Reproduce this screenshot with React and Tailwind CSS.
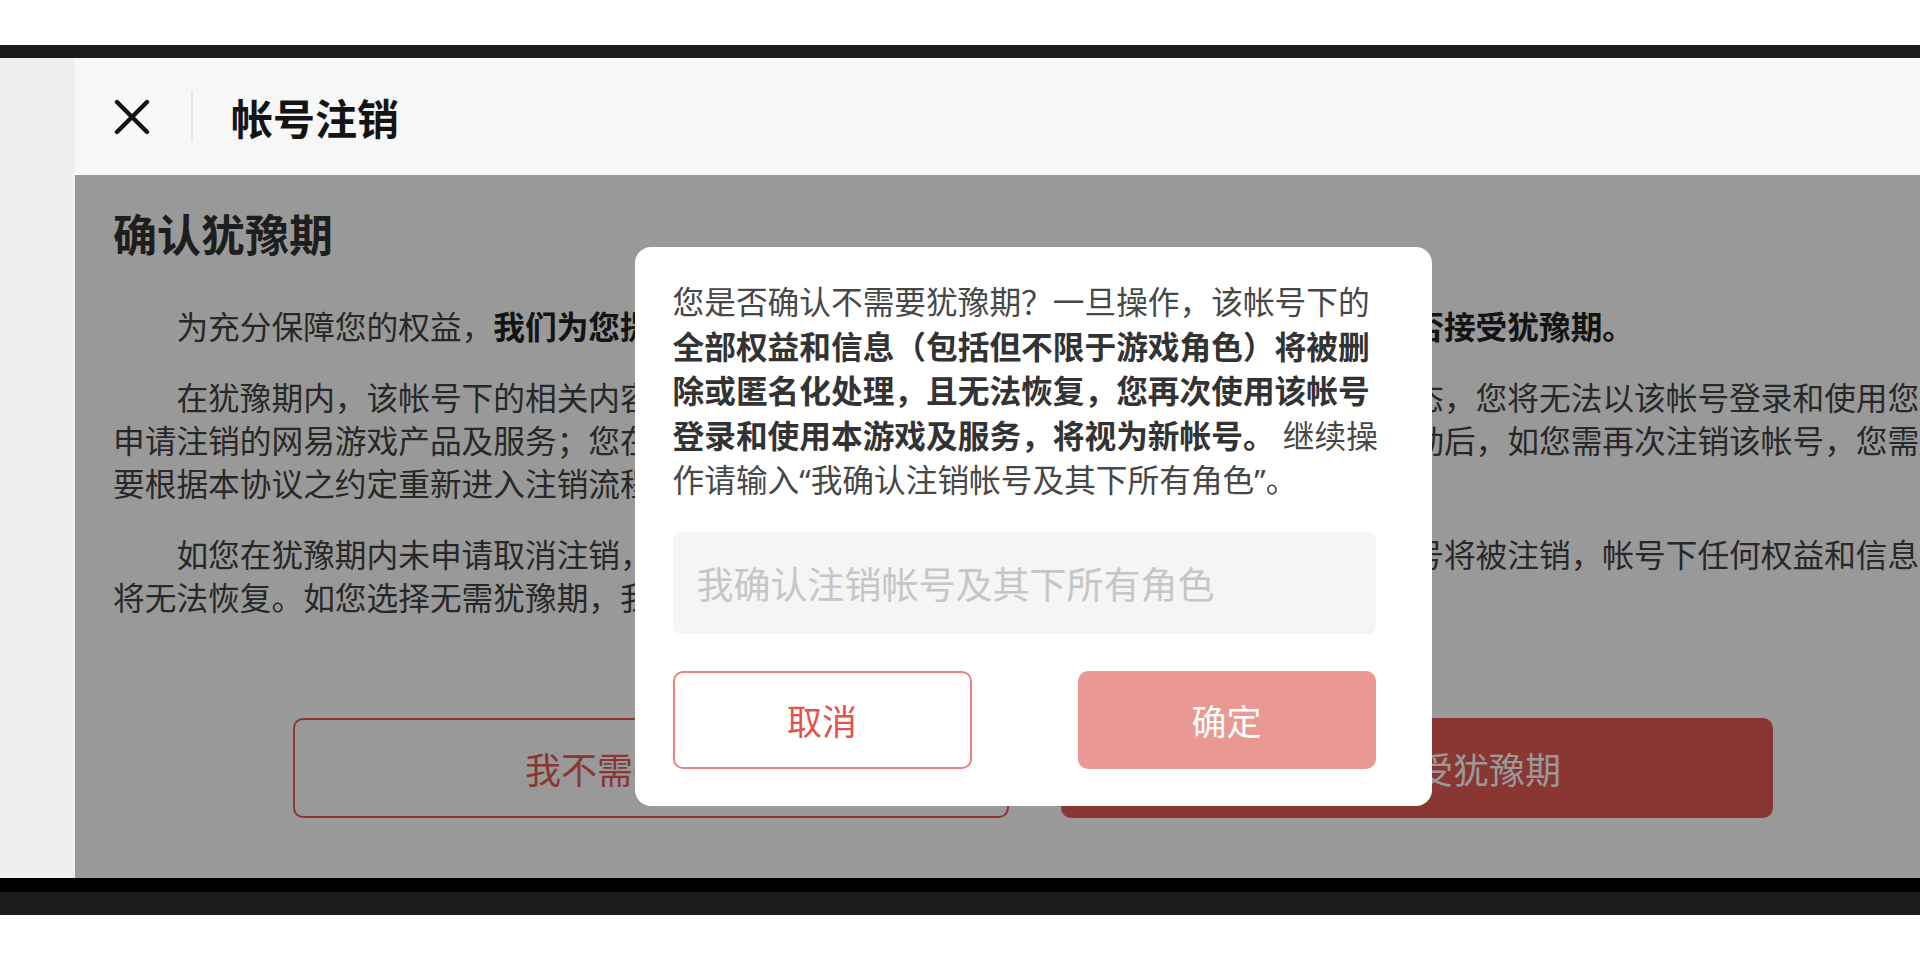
const RED = 'text-[#e65b55]';

function CloseIcon() {
  return (
    <svg width="36" height="36" viewBox="0 0 36 36" fill="none" stroke="#141414" strokeWidth="4.4" strokeLinecap="round">
      <line x1="3" y1="3" x2="33" y2="33" />
      <line x1="33" y1="3" x2="3" y2="33" />
    </svg>
  );
}

function ConfirmDialog() {
  return (
    <div className="w-[797px] rounded-2xl bg-white pl-[38px] pr-[56px] pt-[33px] pb-[37px]">
      {/* latin font first so the curly quotes stay narrow */}
      <p className="w-[719px] text-[31.7px] leading-[44.5px] text-[#474747] font-['Noto_Sans','Noto_Sans_CJK_SC',sans-serif]">
        您是否确认不需要犹豫期？一旦操作，该帐号下的
        <b className="font-bold text-[#333]">
          全部权益和信息（包括但不限于游戏角色）将被删除或匿名化处理，且无法恢复，您再次使用该帐号登录和使用本游戏及服务，将视为新帐号。
        </b>{' '}
        继续操作请输入“我确认注销帐号及其下所有角色”。
      </p>
      <input
        readOnly
        placeholder="我确认注销帐号及其下所有角色"
        className="mt-[29px] block w-full h-[102px] rounded-lg bg-[#f5f5f5] pl-[24px] text-[37px] outline-none placeholder:text-[#c6c6c6]"
      />
      <div className="mt-[37px] flex justify-between">
        <button
          type="button"
          className="w-[299px] h-[98px] rounded-[10px] border-2 border-[#ee7f7a] text-[#e3524d] text-[35px]"
        >
          取消
        </button>
        <button
          type="button"
          className="w-[298px] h-[98px] rounded-[10px] bg-[#ea9894] text-white text-[35px]"
        >
          确定
        </button>
      </div>
    </div>
  );
}

export default function App() {
  return (
    <div className="w-[1920px] h-[960px] overflow-hidden bg-white flex flex-col font-['Noto_Sans_CJK_SC','Noto_Sans',sans-serif]">
      <div className="h-[45px] shrink-0 bg-white" />
      <div className="h-[13px] shrink-0 bg-[#1c1c1e]" />
      <div className="flex h-[820px] shrink-0">
        <aside className="w-[75px] shrink-0 bg-[#efeff1]" />
        <div className="flex-1 min-w-0 flex flex-col">
          <header className="h-[117px] shrink-0 bg-[#f7f7f8] flex items-center pl-[39px]">
            <CloseIcon />
            <span className="ml-[41px] mr-[38px] w-[2px] h-[51px] bg-[#e6e6e6]" />
            <h1 className="text-[42px] leading-none font-bold text-[#141414]">帐号注销</h1>
          </header>
          <main className="relative flex-1 overflow-hidden">
            <div className="relative w-[1916px] h-full bg-white px-[38px] pt-[28px]">
              <h2 className="text-[44px] leading-[60px] font-bold text-[#333]">确认犹豫期</h2>
              <div className="mt-[41px] flex flex-col gap-[28px] text-[31.7px] leading-[43px] text-[#444] whitespace-nowrap">
                <p className="indent-[2em]">
                  为充分保障您的权益，
                  <b className="font-bold text-[#222]">
                    我们为您提供了十五天的犹豫期，请您充分了解相关内容后确认是否接受犹豫期。
                  </b>
                </p>
                <p className="indent-[2em]">
                  在犹豫期内，该帐号下的相关内容将被冻结，帐号将处于不可登录、不可使用的注销中状态，您将无法以该帐号登录和使用您
                  <br />
                  申请注销的网易游戏产品及服务；您在犹豫期内可随时撤回注销申请，犹豫期届满注销流程启动后，如您需再次注销该帐号，您需
                  <br />
                  要根据本协议之约定重新进入注销流程。
                </p>
                <p className="indent-[2em]">
                  如您在犹豫期内未申请取消注销，则在犹豫期届满之后，您所申请注销的网易游戏产品帐号将被注销，帐号下任何权益和信息
                  <br />
                  将无法恢复。如您选择无需犹豫期，我们将在您确认后立即为您注销帐号。
                </p>
              </div>
              <div className="mt-[100px] mx-[180px] flex gap-[52px]">
                <button
                  type="button"
                  className={`flex-1 h-[100px] rounded-[10px] border-2 border-[#e65b55] text-[36px] ${RED}`}
                >
                  我不需要犹豫期
                </button>
                <button
                  type="button"
                  className="flex-1 h-[100px] rounded-[10px] bg-[#e65b55] text-white text-[36px]"
                >
                  我愿意接受犹豫期
                </button>
              </div>
              <div className="absolute inset-0 bg-black/40 flex items-center justify-center">
                <ConfirmDialog />
              </div>
            </div>
          </main>
        </div>
      </div>
      <div className="h-[14px] shrink-0 bg-black" />
      <div className="h-[23px] shrink-0 bg-[#1c1c1e]" />
      <div className="flex-1 bg-white" />
    </div>
  );
}
